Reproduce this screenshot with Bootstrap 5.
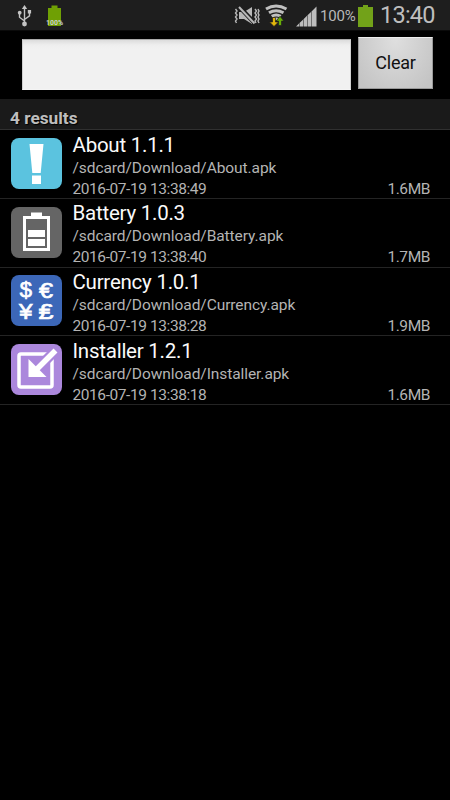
<!DOCTYPE html>
<html lang="en">
<head>
<meta charset="utf-8">
<meta name="viewport" content="width=device-width, initial-scale=1">
<title>Installer</title>
<link href="https://cdn.jsdelivr.net/npm/bootstrap@5.3.0/dist/css/bootstrap.min.css" rel="stylesheet">
<style>
body{background:#000;font-family:Roboto,"Liberation Sans",sans-serif;height:800px;overflow:hidden;color:#b4b4b4}
svg{display:block;flex:none}
.status{height:31px;background:#1e1e1e;border-bottom:1px solid #0a0a0a}
.pct{font-size:15px;line-height:31px;width:36px;margin-left:3px;margin-right:1px;letter-spacing:-.15px;color:#b8b8b8;white-space:nowrap;padding-top:1px}
.clock{font-size:23.5px;line-height:31px;margin-left:6px;letter-spacing:-.75px;color:#bebebe;white-space:nowrap}
.search{height:68px;padding:8px 0 0 22px}
.search .form-control{width:329px;height:51px;background:linear-gradient(#dcdcdc,#eee 5px,#f1f1f1 9px);border:1px solid #d0d0d0;border-top-color:#aaa;border-bottom-color:#f4f4f4}
.search .btn{width:75px;height:52px;margin:-2px 0 0 7px;color:#111;font-size:18px;letter-spacing:-.2px;background:radial-gradient(ellipse at 50% 0,#dfdfdf,#c4c4c4 90%);border:1px solid #999;border-top-color:#eee;padding:0 0 1px}
.heading{height:31px;background:#1a1a1a;border-bottom:1px solid #303030;font-size:17.3px;font-weight:700;line-height:38px;padding-left:10px;color:#bebebe;text-shadow:1px 1px 1px #000}
.entry{height:68.75px;border-bottom:1px solid #242424;padding:2.6px 20px 0 11px}
.entry svg{margin-top:5.4px}
.info{margin-left:10.5px}
.title{font-size:20.5px;line-height:24px;letter-spacing:-.24px;color:#fafafa}
.path{font-size:15.5px;line-height:22px;letter-spacing:-.07px}
.meta{font-size:15.5px;line-height:20px;letter-spacing:-.42px}
</style>
</head>
<body>
<header class="status d-flex">
<svg width="234" height="30" viewBox="0 0 234 30">
<g stroke="#c4c4c4" stroke-width="1.4" fill="none"><path d="M24.5 24V8M24.5 21l-5-3.8V13M24.5 19.500l5-3.700V11"/></g>
<g fill="#c4c4c4"><path d="M24.500 5l2.700 4h-5.400z"/><circle cx="24.500" cy="24" r="2.400"/><circle cx="19.700" cy="12.700" r="1.900"/><path d="M27.800 10h3.300v3.500h-3.300z"/></g>
<path fill="#6fa004" d="M48 8h3.500V5.500h6V8H61v18H48z"/>
<text x="54.500" y="25" font-size="7" font-weight="700" fill="#d0d0d0" text-anchor="middle" textLength="17" lengthAdjust="spacingAndGlyphs">100%</text>
</svg>
<svg width="83" height="30" viewBox="234 0 83 30">
<path fill="#b8b8b8" d="M239 12h5l8-5v17l-8-5h-5z"/>
<path d="M239 6.500l16 17" stroke="#1e1e1e" stroke-width="4.500"/><path d="M239 7l15.500 16.500" stroke="#b8b8b8" stroke-width="2"/>
<g stroke="#b8b8b8" stroke-width="1.400" fill="none"><path d="M235.500 9l1.500 2-1.500 2 1.500 2-1.500 2 1.500 2-1.500 2 1 2M255 9l1.500 2-1.500 2 1.500 2-1.500 2 1.500 2-1.500 2 1 2M258 9l1 2-1 2 1 2-1 2 1 2-1 2 1 2"/></g>
<g fill="none" stroke="#c0c0c0" stroke-width="3"><path d="M266 9q10-6 20.500 0M269 12.800q7-4.200 14.500 0M271.700 16.300q4.500-2.700 9 0"/></g>
<path fill="#c0c0c0" d="M273 18.300q3-1.500 6 0L276 21z"/>
<g stroke="#1e1e1e" stroke-width=".7"><path fill="#e2b70c" d="M272.500 17.500h3V22h3l-4.500 4.500-4.500-4.500h3z"/><path fill="#68ad08" d="M278.500 25.500V21H276l4-4.700 4 4.700h-2.500v4.500z"/></g>
<path fill="#bdbdbd" d="M296 26.500l3-2.900v2.900zM299.500 26.500v-3.400l3.500-3.400v6.800zM303.500 26.500v-7.300l3.500-3.400v10.700zM307.500 26.500V15.300l3.500-3.400v14.600zM311.500 26.500V11.400l5-4.900v20z"/>
</svg>
<span class="pct">100%</span>
<svg width="17" height="30" viewBox="357 0 17 30"><path fill="#72a219" d="M358 7h5V5h5v2h5v20h-15z"/></svg>
<span class="clock">13:40</span>
</header>
<section class="search d-flex align-items-start">
<input class="form-control rounded-0 p-0" type="text" aria-label="Search">
<button class="btn rounded-0" type="button">Clear</button>
</section>
<h1 class="heading m-0">4 results</h1>
<main>
<article class="entry d-flex align-items-start">
<svg width="51" height="51" viewBox="0 0 51 51"><rect width="51" height="51" rx="8" fill="#5bc3df"/><path fill="#fff" d="M18.500 6h14l-2.800 29h-8.400zM21 37.500h9V46h-9z"/></svg>
<div class="info flex-grow-1"><div class="title">About 1.1.1</div><div class="path">/sdcard/Download/About.apk</div><div class="meta d-flex justify-content-between"><span>2016-07-19 13:38:49</span><span>1.6MB</span></div></div>
</article>
<article class="entry d-flex align-items-start">
<svg width="51" height="51" viewBox="0 0 51 51"><rect width="51" height="51" rx="8" fill="#656565"/><path fill="none" stroke="#fff" stroke-width="3" d="M13.500 10.500h24v32h-24z"/><path fill="#fff" d="M20 5.500h11V10H20zM17 23h17v7H17zM17 32h17v7H17z"/></svg>
<div class="info flex-grow-1"><div class="title">Battery 1.0.3</div><div class="path">/sdcard/Download/Battery.apk</div><div class="meta d-flex justify-content-between"><span>2016-07-19 13:38:40</span><span>1.7MB</span></div></div>
</article>
<article class="entry d-flex align-items-start">
<svg width="51" height="51" viewBox="0 0 51 51"><rect width="51" height="51" rx="8" fill="#3c67b8"/><g fill="#fff" stroke="#fff" stroke-width=".7" font-family="Liberation Sans,sans-serif" font-size="22" text-anchor="middle"><text x="14.800" y="22.300">$</text><text x="35" y="22.500" textLength="14" lengthAdjust="spacingAndGlyphs">€</text><text x="14.800" y="43.500" textLength="13.500" lengthAdjust="spacingAndGlyphs">¥</text><text x="35" y="43.500" textLength="15" lengthAdjust="spacingAndGlyphs">₤</text></g></svg>
<div class="info flex-grow-1"><div class="title">Currency 1.0.1</div><div class="path">/sdcard/Download/Currency.apk</div><div class="meta d-flex justify-content-between"><span>2016-07-19 13:38:28</span><span>1.9MB</span></div></div>
</article>
<article class="entry d-flex align-items-start">
<svg width="51" height="51" viewBox="0 0 51 51"><rect width="51" height="51" rx="8" fill="#ab87dc"/><rect x="8" y="10" width="33" height="33" rx="2" fill="none" stroke="#fff" stroke-width="3.500"/><path d="M24 27L45 6" stroke="#ab87dc" stroke-width="10"/><path d="M25 26L44.500 6.500" stroke="#fff" stroke-width="5.500"/><path fill="#fff" d="M17.500 15v18h18z"/></svg>
<div class="info flex-grow-1"><div class="title">Installer 1.2.1</div><div class="path">/sdcard/Download/Installer.apk</div><div class="meta d-flex justify-content-between"><span>2016-07-19 13:38:18</span><span>1.6MB</span></div></div>
</article>
</main>
<script src="https://cdn.jsdelivr.net/npm/bootstrap@5.3.0/dist/js/bootstrap.bundle.min.js"></script>
</body>
</html>
